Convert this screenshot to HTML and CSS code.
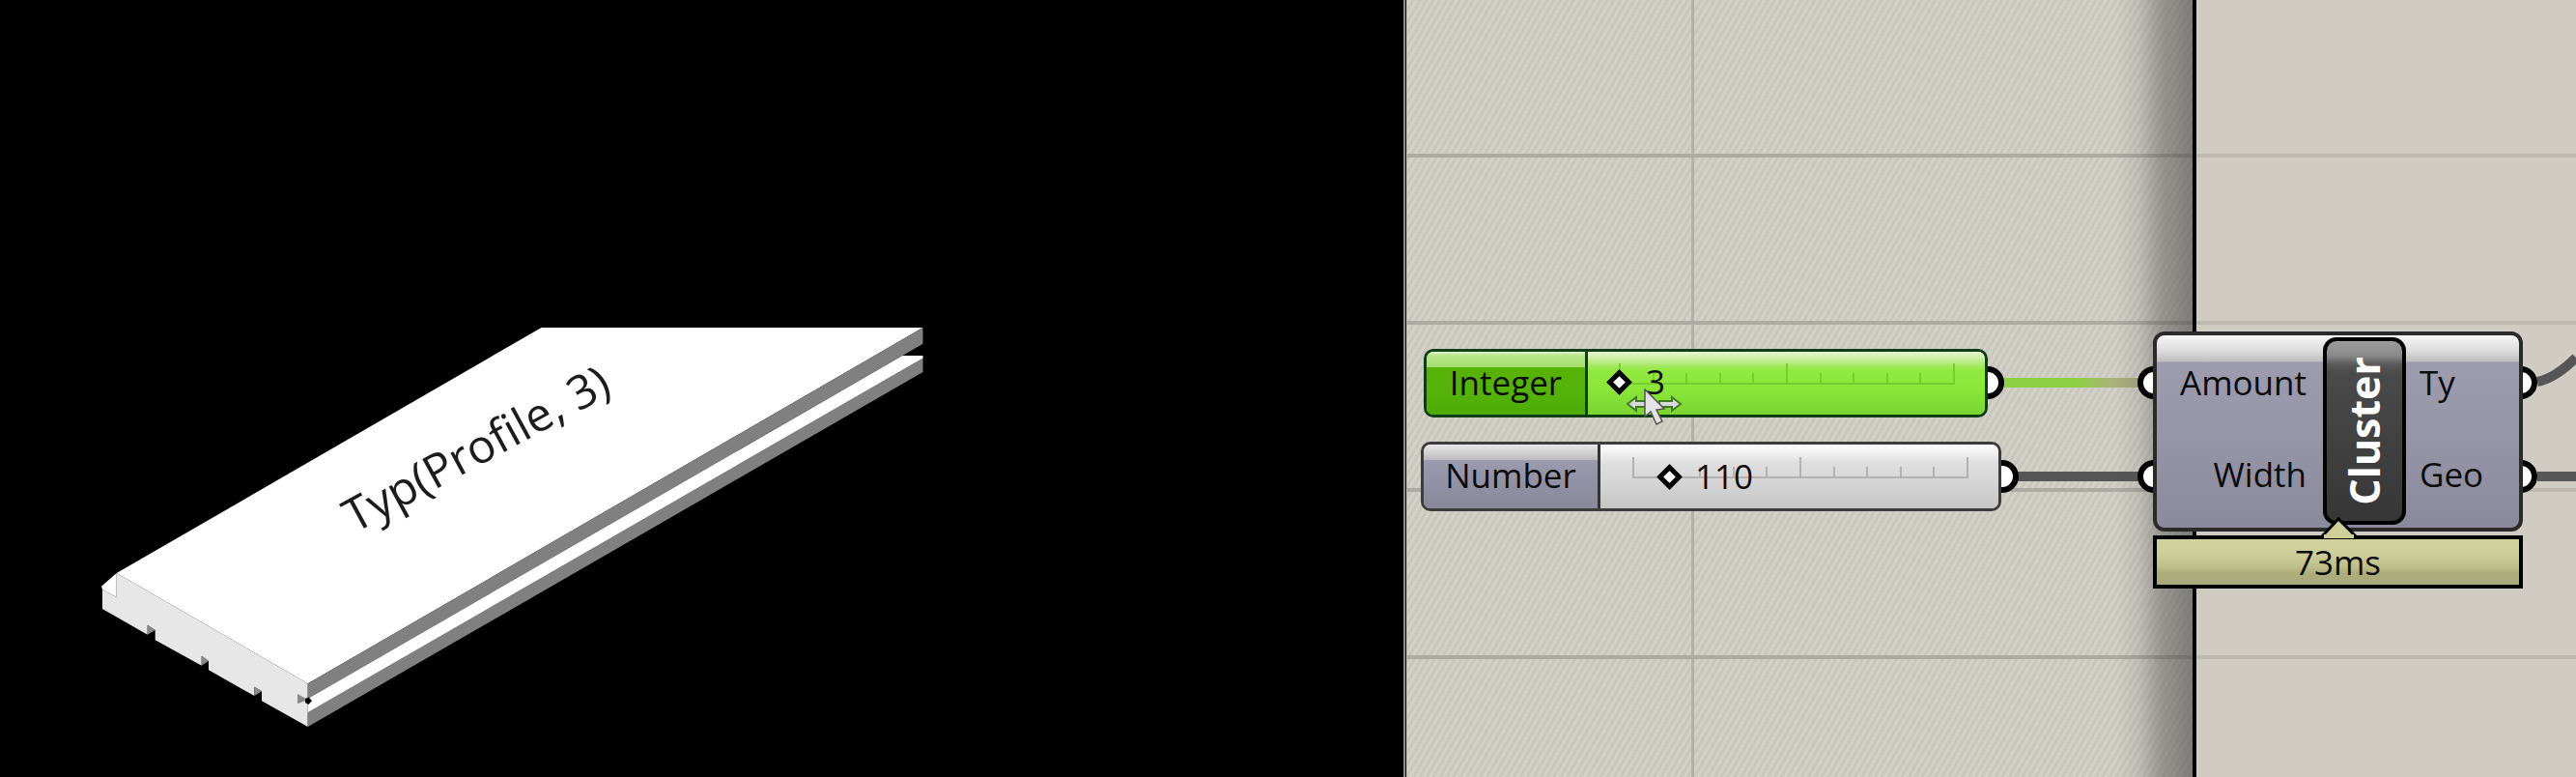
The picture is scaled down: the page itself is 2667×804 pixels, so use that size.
FILE: index.html
```html
<!DOCTYPE html>
<html>
	<head>
		<meta charset="UTF-8">
		<title>Cluster</title>
		<link rel="stylesheet" href="styles.css">
	</head>
	<body>
		<div class="viewport">
			<svg class="model" width="1453" height="804" viewBox="0 0 1453 804">
				<!-- top surface -->
				<polygon fill="#ffffff" points="560.6,339 955.5,339 318.7,707.3 120.7,593"/>
				<!-- front face -->
				<polygon fill="#ffffff" points="105,606.7 120.7,593 120.7,618 106,610"/>
				<polygon fill="#e6e7e6" points="120.7,593 318.7,707.3 318.7,752 271,725.3 271,715.3 263.3,710.7 263.3,720 216,693.3 216,684 208.7,678.7 208.7,688.7 160.7,662.3 160.7,652 152.7,646.7 152.7,656.7 106,630 106,610 120.7,618"/>
				<!-- notches -->
				<polygon fill="#8a8a8a" points="152.7,646.7 160.7,652 152.7,656.7"/>
				<polygon fill="#8a8a8a" points="208.7,678.7 216,684 208.7,688.7"/>
				<polygon fill="#8a8a8a" points="263.3,710.7 271,715.3 263.3,720"/>
				<!-- long sides -->
				<polygon fill="#808080" points="318.7,707.3 955.5,339 955.5,355.7 318.7,723"/>
				<polygon fill="#ffffff" points="318.7,723 934.4,368 955.5,368 955.5,371 318.7,738"/>
				<polygon fill="#808080" points="318.7,737 955.5,370.5 955.5,385 318.7,752"/>
				<polygon fill="#8a8a8a" points="308,718 318.7,724 308,728.3"/>
				<polygon fill="#000000" points="316,723 319.5,721.5 323,725 319.5,729 316,727"/>
				<text class="model-label" transform="translate(367,552) rotate(-28.5)">Typ(Profile, 3)</text>
			</svg>
		</div>
		<div class="edge"></div>
		<div class="canvas">
			<div class="grid-v"></div>
			<div class="grid-h grid-1"></div>
			<div class="grid-h grid-2"></div>
			<div class="grid-h grid-3"></div>
			<div class="grid-h grid-4"></div>

			<svg class="wires" width="1210" height="804" viewBox="1457 0 1210 804">
				<defs>
					<linearGradient id="fade" gradientUnits="userSpaceOnUse" x1="2072" y1="0" x2="2215" y2="0">
						<stop offset="0" stop-color="#8ccf45"/>
						<stop offset="0.55" stop-color="#8ccf45"/>
						<stop offset="0.8" stop-color="#aab27a"/>
						<stop offset="1" stop-color="#aaa985"/>
					</linearGradient>
				</defs>
				<path d="M2072 391 H2215 V401 H2072 Z" fill="url(#fade)"/>
				<path d="M2088 493 H2215" stroke="#565656" stroke-width="10" fill="none"/>
				<path d="M2627 395 C2642 392 2655 382 2667 370" stroke="#565656" stroke-width="10" fill="none"/>
				<path d="M2627 493 H2667" stroke="#565656" stroke-width="10" fill="none"/>
			</svg>

			<div class="shadow"></div>
			<div class="divider"></div>
			<div class="panel"></div>

			<div class="grip grip-a"></div>
			<div class="grip grip-b"></div>
			<div class="grip grip-c"></div>
			<div class="grip grip-d"></div>
			<div class="grip grip-e"></div>
			<div class="grip grip-f"></div>

			<div class="slider slider-int">
				<div class="slider-name">Integer</div>
				<div class="slider-body">
					<div class="track">
						<i class="tall"></i><i></i><i></i><i></i><i></i><i class="tall"></i><i></i><i></i><i></i><i></i><i class="tall"></i>
					</div>
					<span class="knob"></span>
					<span class="value">3</span>
				</div>
			</div>

			<div class="slider slider-num">
				<div class="slider-name">Number</div>
				<div class="slider-body">
					<div class="track">
						<i class="tall"></i><i></i><i></i><i></i><i></i><i class="tall"></i><i></i><i></i><i></i><i></i><i class="tall"></i>
					</div>
					<span class="knob"></span>
					<span class="value">110</span>
				</div>
			</div>

			<div class="cluster">
				<div class="inputs">
					<span>Amount</span>
					<span>Width</span>
				</div>
				<div class="cluster-tag"><span>Cluster</span></div>
				<div class="outputs">
					<span>Ty</span>
					<span>Geo</span>
				</div>
			</div>

			<div class="profiler">
				<span>73ms</span>
			</div>
			<svg class="pointer" width="40" height="24" viewBox="0 0 40 24">
				<path d="M2 22 L19 4 L37 22" fill="#cfcf9a" stroke="#000" stroke-width="3"/>
				<rect x="4" y="20" width="31" height="4" fill="#cfcf9a"/>
			</svg>

			<svg class="cursor" width="64" height="44" viewBox="0 0 64 44">
				<path d="M1 16 L10 9 V13 H20 V19 H10 V23 Z" fill="#d8d8d8" stroke="#3f7a20" stroke-width="2"/>
				<path d="M56 16 L47 9 V13 H34 V19 H47 V23 Z" fill="#d8d8d8" stroke="#3f7a20" stroke-width="2"/>
				<path d="M19 1 V29 L25 24 L31 37 L37 34 L31 22 L39 21 Z" fill="#e4e4e4" stroke="#555" stroke-width="1.5"/>
			</svg>
		</div>
	</body>
</html>
```

FILE: styles.css
```css
* {margin: 0; padding: 0; box-sizing: border-box;}
html, body {height: 804px; overflow: hidden;}
body {
	display: flex;
	width: 2667px;
	background: #000;
	font-family: "Open Sans", "Noto Sans", sans-serif;
	color: #0c0c0c;
}
.viewport {
	width: 1453px;
	height: 804px;
	background: #000;
}
.model {display: block;}
.model-label {
	font-family: "Open Sans", sans-serif;
	font-size: 48px;
	fill: #1c1c1c;
}
.edge {
	width: 4px;
	height: 804px;
	background: linear-gradient(90deg, #8b8b8b 0, #8b8b8b 2px, #111 2px, #111 3px, #b9b7b0 3px);
}

.canvas {
	position: relative;
	flex: 1;
	height: 804px;
	background: repeating-linear-gradient(-60deg, #d3d0c8 0, #d3d0c8 3px, #c9c6be 3px, #c9c6be 6px);
	overflow: hidden;
}
.grid-v {
	position: absolute;
	left: 294px; top: 0;
	width: 3px; height: 804px;
	background: #b2b0a8;
}
.grid-h {
	position: absolute;
	left: 0;
	width: 815px; height: 4px;
	background: #acaaa2;
}
.grid-1 {top: 159px;}
.grid-2 {top: 332px;}
.grid-3 {top: 505px;}
.grid-4 {top: 678px;}

.wires {position: absolute; left: 0; top: 0; z-index: 2;}
.shadow {
	position: absolute;
	left: 733px; top: 0;
	width: 81px; height: 804px;
	background: linear-gradient(90deg, rgba(70,70,66,0) 0, rgba(70,70,66,.12) 30%, rgba(70,70,66,.42) 60%, rgba(70,70,66,.6) 100%);
	z-index: 3;
}
.divider {
	position: absolute;
	left: 813px; top: 0;
	width: 4px; height: 804px;
	background: #000;
	z-index: 3;
}
.panel {
	position: absolute;
	left: 817px; top: 0;
	width: 393px; height: 804px;
	background: linear-gradient(180deg, transparent 159px, #bdb9b1 159px, #bdb9b1 163px, transparent 163px, transparent 332px, #bdb9b1 332px, #bdb9b1 336px, transparent 336px, transparent 505px, #bdb9b1 505px, #bdb9b1 509px, transparent 509px, transparent 678px, #bdb9b1 678px, #bdb9b1 682px, transparent 682px), #d0ccc4;
	z-index: 1;
}

/* grips sit half under the components */
.grip {
	position: absolute;
	width: 34px; height: 34px;
	border: 6px solid #000;
	border-radius: 50%;
	background: #fff;
	z-index: 4;
}
.grip-a {left: 584px; top: 379px;}
.grip-b {left: 599px; top: 476px;}
.grip-c {left: 756px; top: 379px;}
.grip-d {left: 756px; top: 476px;}
.grip-e {left: 1136px; top: 379px;}
.grip-f {left: 1136px; top: 476px;}

.slider {
	position: absolute;
	display: flex;
	border: 3px solid #000;
	border-radius: 10px;
	overflow: hidden;
	z-index: 5;
	font-size: 35px;
}
.slider-name {
	display: flex;
	align-items: center;
	justify-content: center;
	border-right: 3px solid #000;
	padding-bottom: 3px;
}
.slider-body {
	position: relative;
	flex: 1;
}
.slider-int {
	left: 17px; top: 361px;
	width: 584px; height: 71px;
	border-color: #0f3d14;
}
.slider-int .slider-name {
	width: 167px;
	border-color: #0f3d14;
	background: linear-gradient(180deg, #e4f3d0 0, #b6e68a 6%, #a9e070 24%, #58b208 25%, #55b208 62%, #4dac05 100%);
}
.slider-int .slider-body {
	background: linear-gradient(180deg, #e8f7d4 0, #c5ef9b 12%, #a6e864 22%, #90e93e 30%, #8be63a 60%, #7fda33 85%, #7ad52f 100%);
}
.slider-num {
	left: 14px; top: 457px;
	width: 601px; height: 72px;
	border-color: #3c3c3c;
}
.slider-num .slider-name {
	width: 183px;
	border-color: #333;
	background: linear-gradient(180deg, #e8e8e8 0, #d2d2d2 12%, #bcbcc0 24%, #9b9bae 25%, #9090a4 65%, #888898 100%);
}
.slider-num .slider-body {
	background: linear-gradient(180deg, #fbfbfb 0, #f2f2f2 12%, #dfdfdf 28%, #d8d8d8 50%, #cbcbcb 85%, #c6c6c6 100%);
}
.track {
	position: absolute;
	height: 2px;
	display: flex;
	justify-content: space-between;
	align-items: flex-end;
	width: 348px;
}
.track i {
	display: block;
	width: 2px;
	height: 10px;
}
.track i.tall {height: 20px;}
.slider-int .track {left: 32px; top: 32px; border-bottom: 2px solid #74cf2e;}
.slider-int .track i {background: #74cf2e;}
.slider-num .track {left: 33px; top: 33px; border-bottom: 2px solid #b2b2b2;}
.slider-num .track i {background: #b2b2b2;}
.knob {
	position: absolute;
	width: 19px; height: 19px;
	background: #fff;
	border: 5px solid #000;
	transform: rotate(45deg);
}
.slider-int .knob {left: 23px; top: 22px;}
.slider-num .knob {left: 62px; top: 24px;}
.value {
	position: absolute;
	top: 9px;
	line-height: 44px;
}
.slider-int .value {left: 60px;}
.slider-num .value {left: 98px; top: 11px;}

.cluster {
	position: absolute;
	left: 772px; top: 343px;
	width: 383px; height: 207px;
	display: flex;
	border: 4px solid #2a2a2a;
	border-radius: 12px;
	background: linear-gradient(180deg, #f6f6f6 0, #dcdcdc 8%, #c6c6c6 12%, #c2c2c2 13.5%, #9c9cae 14%, #9696a8 50%, #8a8a9c 100%);
	font-size: 35px;
	z-index: 5;
}
.inputs, .outputs {
	display: flex;
	flex-direction: column;
	gap: 51px;
	padding-top: 27px;
	line-height: 44px;
}
.inputs {
	align-items: flex-end;
	width: 155px;
	margin-right: 17px;
}
.outputs {
	padding-left: 14px;
}
.cluster-tag {
	width: 86px;
	height: 194px;
	margin-top: 2px;
	display: flex;
	align-items: center;
	justify-content: center;
	border: 4px solid #000;
	border-radius: 14px;
	background: linear-gradient(180deg, #9c9c9c 0, #8a8a8a 8%, #5a5a5a 13%, #4a4a4a 18%, #404040 60%, #363636 100%);
}
.cluster-tag span {
	writing-mode: vertical-rl;
	transform: rotate(180deg);
	font-size: 43px;
	font-weight: 700;
	color: #fff;
	line-height: 50px;
}

.profiler {
	position: absolute;
	left: 772px; top: 554px;
	width: 383px; height: 55px;
	display: flex;
	justify-content: center;
	border: 4px solid #000;
	background: linear-gradient(180deg, #d2d29e 0, #cfcf9b 30%, #bfbf8c 60%, #adad7c 75%, #a8a878 100%);
	font-size: 35px;
	line-height: 47px;
	z-index: 5;
}
.pointer {
	position: absolute;
	left: 945px; top: 533px;
	z-index: 6;
}
.cursor {
	position: absolute;
	left: 227px; top: 402px;
	z-index: 7;
}
```
